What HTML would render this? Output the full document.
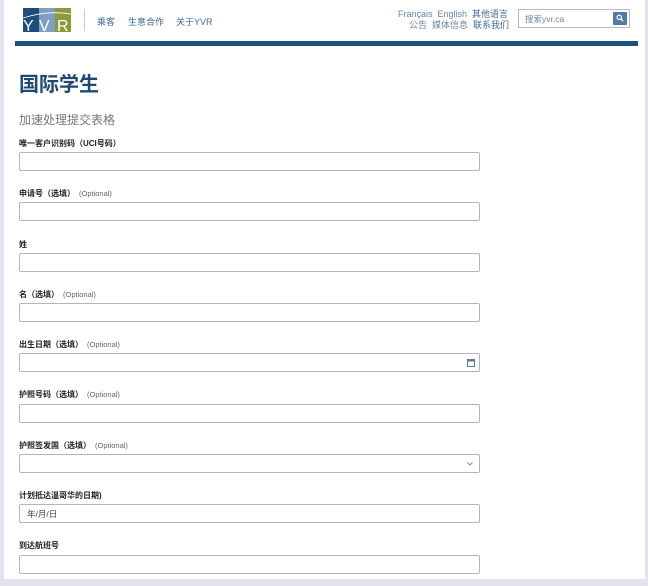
<!DOCTYPE html>
<html><head><meta charset="utf-8"><style>
*{margin:0;padding:0;box-sizing:border-box}
body{width:648px;height:586px;background:#e3e3ee;font-family:"Liberation Sans","Noto Sans CJK SC",sans-serif;position:relative;overflow:hidden}
.panel{position:absolute;left:4px;top:0;width:641px;height:579px;background:#fff}
.a{position:absolute}
.nav{font-size:9px;color:#3f6a92}
.lbl{position:absolute;left:19px;font-size:8px;font-weight:bold;color:#222}
.lbl span{font-weight:normal;color:#666;font-size:7.5px;margin-left:4px}
.inp{position:absolute;left:19px;width:461px;height:19px;border:1px solid #b5b5b5;border-radius:2px;background:#fff}
</style></head><body>
<div class="panel"></div>
<svg class="a" style="left:23px;top:8px" width="48" height="24" viewBox="0 0 48 24">
<rect x="0" y="0" width="16" height="24" fill="#1f4d7a"/>
<rect x="16" y="0" width="16" height="24" fill="#7f9fc0"/>
<rect x="32" y="0" width="16" height="24" fill="#8c9a3a"/>
<path d="M0 10 Q24 2 48 6" stroke="#fff" stroke-width="0.8" fill="none"/>
<text x="0" y="23" font-family="Liberation Sans" font-size="16" fill="#fff" textLength="16">Y</text>
<text x="16" y="23" font-family="Liberation Sans" font-size="16" fill="#fff">V</text>
<text x="34" y="23" font-family="Liberation Sans" font-size="16" fill="#fff">R</text>
</svg>
<div class="a" style="left:84px;top:9px;width:1px;height:22px;background:#ccc"></div>
<div class="a nav" style="left:97px;top:15px">乘客</div>
<div class="a nav" style="left:128px;top:15px">生意合作</div>
<div class="a nav" style="left:176px;top:15px">关于YVR</div>
<div class="a nav" style="left:398px;top:7px;color:#6a86a6">Français&nbsp;&nbsp;English&nbsp;&nbsp;<span style="color:#3f6a92">其他语言</span></div>
<div class="a nav" style="left:409px;top:18px;color:#6a86a6">公告&nbsp;&nbsp;媒体信息&nbsp;&nbsp;<span style="color:#3f6a92">联系我们</span></div>
<div class="a" style="left:518px;top:9px;width:112px;height:19px;border:1px solid #bbb;background:#fff"></div>
<div class="a" style="left:525px;top:13px;font-size:8.5px;color:#6a86a6">搜索yvr.ca</div>
<div class="a" style="left:613px;top:12px;width:14px;height:13px;background:#4f7ba6;border-radius:1px"></div>
<svg class="a" style="left:616px;top:14px" width="8" height="8"><circle cx="3.3" cy="3.3" r="2.2" stroke="#fff" stroke-width="1.2" fill="none"/><path d="M5 5L7 7" stroke="#fff" stroke-width="1.3"/></svg>
<div class="a" style="left:15px;top:41px;width:623px;height:5px;background:#1a5183"></div>
<div class="a" style="left:19px;top:68px;font-size:20px;font-weight:bold;color:#1c4a73">国际学生</div>
<div class="a" style="left:19px;top:111px;font-size:12px;color:#777">加速处理提交表格</div>

<div class="lbl" style="top:138px">唯一客户识别码（UCI号码）</div>
<div class="inp" style="top:152px"></div>
<div class="lbl" style="top:188px">申请号（选填）<span>(Optional)</span></div>
<div class="inp" style="top:202px"></div>
<div class="lbl" style="top:239px">姓</div>
<div class="inp" style="top:253px"></div>
<div class="lbl" style="top:289px">名（选填）<span>(Optional)</span></div>
<div class="inp" style="top:303px"></div>
<div class="lbl" style="top:339px">出生日期（选填）<span>(Optional)</span></div>
<div class="inp" style="top:353px"><svg class="a" style="left:447px;top:5px" width="8" height="8"><rect x="0.5" y="0.5" width="7" height="7" fill="none" stroke="#5a7a9a"/><rect x="0.5" y="0.5" width="7" height="2" fill="#5a7a9a"/></svg></div>
<div class="lbl" style="top:389px">护照号码（选填）<span>(Optional)</span></div>
<div class="inp" style="top:404px"></div>
<div class="lbl" style="top:440px">护照签发国（选填）<span>(Optional)</span></div>
<div class="inp" style="top:454px"><svg class="a" style="left:447px;top:7px" width="6" height="4"><path d="M0.5 0.5L3 3L5.5 0.5" stroke="#888" fill="none"/></svg></div>
<div class="lbl" style="top:490px">计划抵达温哥华的日期)</div>
<div class="inp" style="top:504px"><span class="a" style="left:7px;top:3px;font-size:8.5px;color:#444">年/月/日</span></div>
<div class="lbl" style="top:540px">到达航班号</div>
<div class="inp" style="top:555px"></div>
</body></html>
